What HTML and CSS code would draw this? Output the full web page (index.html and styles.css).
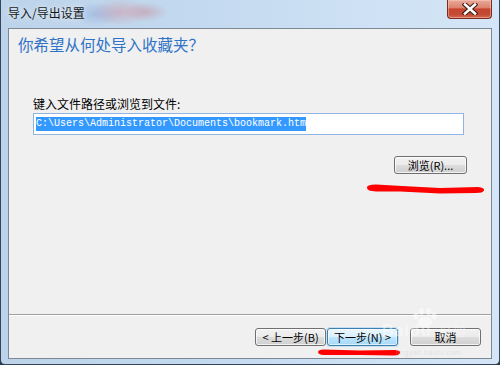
FILE: index.html
```html
<!DOCTYPE html>
<html lang="zh-CN">
<head>
<meta charset="utf-8">
<title>导入/导出设置</title>
<link rel="stylesheet" href="styles.css">
</head>
<body>
<div class="window">
  <div class="titlebar">
    <span class="title">导入/导出设置</span>
    <button class="close" aria-label="关闭">
      <svg width="16" height="12" viewBox="0 0 16 12">
        <path d="M3 1.5 L13 10.5 M13 1.5 L3 10.5" stroke="#3a1a14" stroke-width="4.6" stroke-linecap="square" fill="none"/>
        <path d="M3 1.5 L13 10.5 M13 1.5 L3 10.5" stroke="#ffffff" stroke-width="2.6" stroke-linecap="square" fill="none"/>
      </svg>
    </button>
  </div>
  <div class="client">
    <div class="heading">你希望从何处导入收藏夹？</div>
    <div class="body">
      <div class="label">键入文件路径或浏览到文件:</div>
      <div class="input"><span class="sel">C:\Users\Administrator\Documents\bookmark.htm</span></div>
      <div class="browse-row"><button class="btn btn-browse">浏览(R)...</button></div>
    </div>
    <div class="spacer"></div>
    <div class="divider"></div>
    <div class="footer">
      <button class="btn btn-nav">&lt; 上一步(B)</button>
      <button class="btn btn-nav btn-hot">下一步(N) &gt;</button>
      <button class="btn btn-nav btn-cancel">取消</button>
    </div>
  </div>
  <svg class="marks" width="500" height="365" viewBox="0 0 500 365">
    <path d="M367 188 Q366 184.5 376 184.5 L402 186 L440 188 L478 187 Q485 187.5 484 190.5 Q483 193 476 193 L440 193.5 L400 191.5 L376 191.5 Q367 191 367 188 Z" fill="#ff0000"/>
    <path d="M318 352 Q318 349.5 324 349.5 L360 350.5 L395 350 Q401 350.5 400 353 Q399 355.5 394 355.5 L360 355 L324 355 Q318 354.5 318 352 Z" fill="#ff0000"/>
    <g class="paw" fill="#ffffff" fill-opacity="0.5">
      <ellipse cx="425" cy="322" rx="7" ry="5.5"/>
      <ellipse cx="416" cy="316" rx="2.6" ry="3.4"/>
      <ellipse cx="421.5" cy="311.5" rx="2.6" ry="3.4"/>
      <ellipse cx="428.5" cy="311.5" rx="2.6" ry="3.4"/>
      <ellipse cx="434" cy="316" rx="2.6" ry="3.4"/>
    </g>
  </svg>
  <div class="watermark">
    <span class="wm-logo">Baidu<span class="wm-cn">经验</span></span>
    <span class="wm-url">jingyan.baidu.com</span>
  </div>
</div>
</body>
</html>
```

FILE: styles.css
```css
* {
  box-sizing: border-box;
}

html, body {
  margin: 0;
  padding: 0;
}

body {
  width: 500px;
  height: 365px;
  overflow: hidden;
  background: #2a3645;
  font-family: "Noto Sans CJK SC", "Noto Sans", sans-serif;
  font-size: 12px;
  color: #000;
}

.window {
  position: relative;
  width: 500px;
  height: 365px;
  display: flex;
  flex-direction: column;
  padding: 0 7px 5px 7px;
  border: 1px solid #34465a;
  border-top: none;
  border-radius: 0 0 5px 5px;
  background:
    radial-gradient(ellipse 30px 14px at 120px 12px, rgba(214, 140, 150, 0.45), rgba(214, 140, 150, 0) 100%),
    radial-gradient(ellipse 28px 12px at 95px 14px, rgba(120, 150, 210, 0.35), rgba(120, 150, 210, 0) 100%),
    radial-gradient(ellipse 22px 10px at 145px 12px, rgba(200, 110, 120, 0.35), rgba(200, 110, 120, 0) 100%),
    linear-gradient(90deg, #bcd3ea 0%, #c3d9ef 40%, #cfe2f5 75%, #d3e5f6 100%);
}

.titlebar {
  height: 28px;
  flex: none;
  display: flex;
  justify-content: space-between;
  align-items: flex-start;
}

.title {
  padding-top: 6px;
  font-size: 12px;
  line-height: 14px;
  color: #1a1a1a;
  text-shadow: 0 0 6px rgba(255, 255, 255, 0.9);
}

.close {
  width: 45px;
  height: 19px;
  margin: 0;
  padding: 0;
  display: flex;
  align-items: center;
  justify-content: center;
  border: 1px solid #7b2a1e;
  border-top: none;
  border-radius: 0 0 4px 4px;
  background: linear-gradient(#e9aa9a 0%, #dd8471 42%, #c8452f 50%, #c24a34 80%, #d26a52 100%);
  box-shadow: inset 0 0 0 1px rgba(255, 210, 200, 0.45);
}

.close svg {
  display: block;
}

.client {
  flex: 1;
  display: flex;
  flex-direction: column;
  background: #f0f0f0;
  border: 1px solid #7d8895;
}

.heading {
  padding: 5px 0 0 9px;
  font-size: 15.5px;
  line-height: 20px;
  color: #2f73c8;
}

.body {
  margin-top: 43px;
  padding: 0 24px;
  display: flex;
  flex-direction: column;
}

.label {
  font-size: 12px;
  line-height: 14px;
  margin-bottom: 2px;
}

.input {
  height: 22px;
  margin-right: 3px;
  padding: 3px 2px;
  background: #fff;
  border: 1px solid #8fb6e3;
  font-family: "Liberation Mono", "DejaVu Sans Mono", monospace;
  font-size: 10px;
  line-height: 14px;
  white-space: nowrap;
  overflow: hidden;
}

.sel {
  display: inline-block;
  background: #3399ff;
  color: #fff;
  line-height: 14px;
}

.browse-row {
  margin-top: 21px;
  display: flex;
  justify-content: flex-end;
}

.btn {
  height: 18px;
  margin: 0;
  padding: 0;
  border: 1px solid #707070;
  border-radius: 3px;
  background: linear-gradient(#f2f2f2 0%, #ebebeb 50%, #dddddd 50%, #cfcfcf 100%);
  box-shadow: inset 0 0 0 1px rgba(255, 255, 255, 0.75);
  font-family: "Noto Sans CJK SC", "Noto Sans", sans-serif;
  font-size: 11px;
  line-height: 15px;
  color: #000;
  white-space: nowrap;
}

.btn-browse {
  width: 73px;
}

.spacer {
  flex: 1;
}

.divider {
  height: 2px;
  flex: none;
  border-top: 1px solid #a0a0a0;
  border-bottom: 1px solid #ffffff;
}

.footer {
  flex: none;
  display: flex;
  justify-content: flex-end;
  padding: 12px 10px 12px 0;
  gap: 1px;
}

.btn-nav {
  width: 71px;
}

.btn-hot {
  border-color: #3c7fb1;
  background: linear-gradient(#eaf6fd 0%, #d9f0fc 50%, #bee6fd 50%, #a7d9f5 100%);
  box-shadow: inset 0 0 0 1px rgba(255, 255, 255, 0.6), 0 0 0 1px rgba(140, 200, 240, 0.4);
}

.btn-cancel {
  margin-left: 11px;
}

.marks {
  position: absolute;
  left: -1px;
  top: 0;
  pointer-events: none;
}

.watermark {
  position: absolute;
  left: 381px;
  top: 321px;
  display: flex;
  flex-direction: column;
  align-items: flex-start;
  pointer-events: none;
  font-family: "Liberation Sans", Arial, sans-serif;
}

.wm-logo {
  font-size: 16px;
  font-weight: bold;
  line-height: 20px;
  letter-spacing: 1px;
  color: rgba(255, 255, 255, 0.42);
}

.wm-cn {
  margin-left: 8px;
  font-family: "Noto Sans CJK SC", sans-serif;
  font-size: 13px;
  font-weight: normal;
}

.wm-url {
  margin-top: 7px;
  margin-left: 14px;
  font-size: 7px;
  line-height: 9px;
  letter-spacing: 0.5px;
  color: rgba(190, 190, 190, 0.35);
}
```
